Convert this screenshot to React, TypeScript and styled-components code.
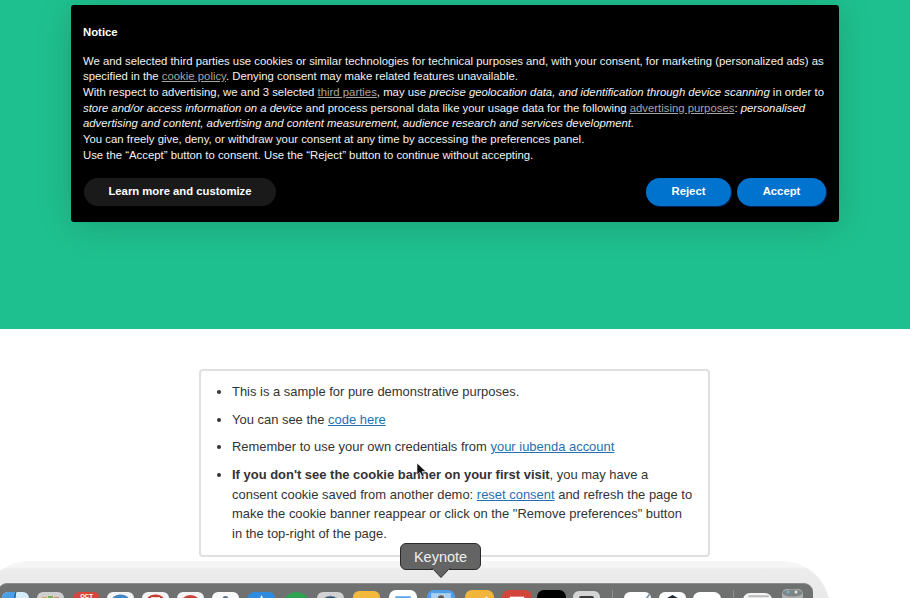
import styled, { createGlobalStyle } from 'styled-components';
import type { ReactNode } from 'react';

const GlobalStyle = createGlobalStyle`
  html, body {
    margin: 0;
    padding: 0;
    background: #fff;
  }
  body {
    font-family: "Liberation Sans", Arial, sans-serif;
  }
`;

const Page = styled.div`
  position: relative;
  width: 910px;
  height: 598px;
  overflow: hidden;
`;

const Hero = styled.div`
  height: 329px;
  background: #1fc08f;
`;

const Banner = styled.div`
  position: absolute;
  top: 5px;
  left: 71px;
  width: 768px;
  height: 217px;
  box-sizing: border-box;
  padding: 20px 13px 16px 12px;
  display: flex;
  flex-direction: column;
  background: #000;
  border-radius: 3px;
  box-shadow: 0 4px 36px rgba(0, 0, 0, 0.16);
  color: #fff;
  font-size: 11.35px;
  line-height: 15.67px;
`;

const BannerTitle = styled.div`
  font-weight: 700;
  margin-bottom: 13px;
`;

const BannerText = styled.div`
  flex: 1;
  white-space: nowrap;
  color: #f2f2f2;
`;

const BannerLink = styled.a`
  color: #a6a6a6;
  text-decoration: underline;
`;

const BannerActions = styled.div`
  display: flex;
  align-items: center;
  padding-left: 1px;
`;

const Button = styled.div<{ $width: number; $primary?: boolean }>`
  width: ${(p) => p.$width}px;
  height: 28px;
  margin-left: ${(p) => (p.$primary ? '6px' : '0')};
  display: flex;
  align-items: center;
  justify-content: center;
  box-sizing: border-box;
  border-radius: 14px;
  background: ${(p) => (p.$primary ? '#0073ce' : '#1a1a1a')};
  box-shadow: ${(p) => (p.$primary ? '1px 1px 0 0 #03235c' : 'none')};
  color: #fff;
  font-size: 11.3px;
  font-weight: 700;
`;

const Spacer = styled.div`
  flex: 1;
`;

const Card = styled.div`
  width: 511px;
  box-sizing: border-box;
  margin: 40px 0 0 199px;
  padding: 11px 14px 11px 0;
  border: 2px solid #e0e0e0;
  border-radius: 4px;
  color: #333;
  font-size: 12.96px;
  line-height: 19.65px;
`;

const List = styled.ul`
  margin: 0;
  padding-left: 31px;
`;

const Item = styled.li`
  margin-bottom: 8px;

  &:last-child {
    margin-bottom: 0;
  }
`;

const TextLink = styled.a`
  color: #2470b3;
  text-decoration: underline;
`;

const Cursor = styled.svg`
  position: absolute;
  top: 462px;
  left: 416px;
`;

const DockHalo = styled.div`
  position: absolute;
  left: -19px;
  bottom: -12px;
  width: 849px;
  height: 49px;
  box-sizing: border-box;
  padding: 22px 17px 0;
  display: flex;
  align-items: flex-start;
  border-radius: 48px 48px 0 0;
  background: linear-gradient(#f6f6f6 0, #f5f5f5 6px, #ececec 8px, #e8e8e8 100%);
`;

const Dock = styled.div`
  flex: 1;
  height: 15px;
  padding-left: 4px;
  display: flex;
  overflow: hidden;
  background: #6f7070;
  border-top: 1px solid #8d8d8d;
  box-sizing: border-box;
  border-radius: 9px 9px 0 0;
`;

const DockIcon = styled.div<{ $w: number; $top: number; $ml: number; $bg: string }>`
  position: relative;
  flex: none;
  width: ${(p) => p.$w}px;
  height: ${(p) => p.$w}px;
  margin-top: ${(p) => p.$top}px;
  margin-left: ${(p) => p.$ml}px;
  overflow: hidden;
  background: ${(p) => p.$bg};
  border-radius: ${(p) => Math.round(p.$w * 0.24)}px;

  svg {
    display: block;
    width: 100%;
    height: 100%;
  }
`;

const CalendarMonth = styled.div`
  padding-top: 1px;
  text-align: center;
  color: #fff;
  font-size: 6px;
  font-weight: 700;
  line-height: 6px;
`;

const DockDivider = styled.div<{ $ml: number }>`
  flex: none;
  width: 1px;
  margin: 6px 0 0 ${(p) => p.$ml}px;
  background: #8f9090;
`;

const Tooltip = styled.div`
  position: absolute;
  top: 543px;
  left: 400px;
  width: 81px;
  height: 27px;
  box-sizing: border-box;
  display: flex;
  align-items: center;
  justify-content: center;
  border: 1px solid #2a2a2a;
  border-radius: 6px;
  background: #646464;
  color: #f0f0f0;
  font-size: 14.5px;
`;

const TooltipArrow = styled.svg`
  position: absolute;
  top: 568px;
  left: 431px;
`;

type DockEntry = { w?: number; top?: number; ml?: number; bg: string; art?: ReactNode };

const art = (children: ReactNode) => <svg viewBox="0 0 27 27">{children}</svg>;

const leftApps: DockEntry[] = [
  { ml: 0, bg: '#d6ecf8', art: art(<><rect width="14" height="27" fill="#4a9fe6" /><path d="M14 0q-3 6 -1 14" stroke="#24507a" fill="none" /></>) },
  { bg: '#cfcfcf', art: art(<><rect x="5" y="5" width="5" height="5" fill="#d9a24a" /><rect x="11" y="4" width="5" height="5" fill="#79b05a" /><rect x="17" y="5" width="5" height="5" fill="#d9864a" /></>) },
  { ml: 9, bg: '#d2483c', art: <CalendarMonth>OCT</CalendarMonth> },
  { ml: 7, bg: '#f4f4f4', art: art(<circle cx="13.5" cy="13.5" r="11" fill="#3f87c9" />) },
  { bg: '#f4f4f4', art: art(<><circle cx="13.5" cy="13.5" r="11" fill="#c93a30" /><rect x="9" y="5" width="9" height="3" fill="#f5d6d0" /></>) },
  { bg: '#f4f4f4', art: art(<circle cx="13.5" cy="14" r="11" fill="#c8443a" />) },
  { bg: '#fafafa', art: art(<><circle cx="13.5" cy="7" r="3" fill="#55708c" /><circle cx="8" cy="9" r="2" fill="#9db0c4" /><circle cx="19" cy="9" r="2" fill="#9db0c4" /></>) },
  { ml: 9, bg: '#2f8be0', art: art(<path d="M13.5 3l2.5 5h-5z" fill="#dcecfa" />) },
  { ml: 8, bg: 'transparent', art: art(<circle cx="13.5" cy="13.5" r="13.5" fill="#2ea34f" />) },
  { ml: 7, bg: '#d2d2d2', art: art(<circle cx="13.5" cy="14" r="10" fill="#27486b" stroke="#8ea0b0" />) },
  { ml: 9, top: 7, bg: '#f3b93d', art: art(<rect y="9" width="27" height="18" fill="#fff" />) },
  { w: 28, ml: 9, top: 6, bg: '#fff', art: art(<rect x="6" y="6" width="15" height="15" fill="#62a6e6" />) },
  { w: 28, ml: 10, top: 6, bg: '#4f9fe8', art: art(<><rect x="4" y="3" width="19" height="20" fill="#a9d0f0" /><circle cx="13.5" cy="8" r="3" fill="#6b5a4a" /></>) },
  { w: 29, ml: 10, top: 6, bg: '#f1b53c', art: art(<path d="M14 12l6-6 1.5 1.5-6 6z" fill="#fff" />) },
  { w: 30, ml: 8, top: 6, bg: '#d2453a', art: art(<><rect x="7" y="6" width="13" height="3" fill="#fff" /><rect x="9" y="9" width="9" height="5" fill="#fff" /></>) },
  { w: 29, ml: 5, top: 6, bg: '#000', art: art(<rect x="10" y="8" width="7" height="12" fill="#8a8a8a" />) },
  { ml: 7, top: 7, bg: '#d4d4d4', art: art(<rect x="6" y="5" width="15" height="20" rx="2" fill="#3a3a3a" />) },
];

const middleApps: DockEntry[] = [
  { ml: 11, bg: '#fff', art: art(<path d="M21 7l5-7 1 1-4 7z" fill="#7c97a8" />) },
  { bg: '#fff', art: art(<path d="M13.5 3l9 5v12h-18V8z" fill="#1c2b36" />) },
  { w: 28, ml: 7, bg: '#fff', art: art(<rect x="8" y="8" width="11" height="2" fill="#b8b8b8" />) },
];

const rightApps: DockEntry[] = [
  { w: 29, ml: 9, top: 9, bg: '#f4f4f4', art: art(<rect x="5" y="2" width="19" height="2" fill="#bdbdbd" />) },
];

const DockApp = ({ w = 27, top = 8, ml = 8, bg, art: content }: DockEntry) => (
  <DockIcon $w={w} $top={top} $ml={ml} $bg={bg}>
    {content}
  </DockIcon>
);

const App = () => {
  return (
    <Page>
      <GlobalStyle />
      <Hero />
      <Card>
        <List>
          <Item>This is a sample for pure demonstrative purposes.</Item>
          <Item>
            You can see the <TextLink>code here</TextLink>
          </Item>
          <Item>
            Remember to use your own credentials from <TextLink>your iubenda account</TextLink>
          </Item>
          <Item>
            <b>If you don't see the cookie banner on your first visit</b>, you may have a consent
            cookie saved from another demo: <TextLink>reset consent</TextLink> and refresh the page
            to make the cookie banner reappear or click on the "Remove preferences" button in the
            top-right of the page.
          </Item>
        </List>
      </Card>

      <Banner>
        <BannerTitle>Notice</BannerTitle>
        <BannerText>
          We and selected third parties use cookies or similar technologies for technical purposes
          and, with your consent, for marketing (personalized ads) as
          <br />
          specified in the <BannerLink>cookie policy</BannerLink>. Denying consent may make related
          features unavailable.
          <br />
          With respect to advertising, we and 3 selected <BannerLink>third parties</BannerLink>, may
          use <i>precise geolocation data, and identification through device scanning</i> in order to
          <br />
          <i>store and/or access information on a device</i> and process personal data like your
          usage data for the following <BannerLink>advertising purposes</BannerLink>:{' '}
          <i>personalised</i>
          <br />
          <i>
            advertising and content, advertising and content measurement, audience research and
            services development.
          </i>
          <br />
          You can freely give, deny, or withdraw your consent at any time by accessing the
          preferences panel.
          <br />
          Use the “Accept” button to consent. Use the “Reject” button to continue without accepting.
        </BannerText>
        <BannerActions>
          <Button $width={192}>Learn more and customize</Button>
          <Spacer />
          <Button $width={85} $primary>
            Reject
          </Button>
          <Button $width={89} $primary>
            Accept
          </Button>
        </BannerActions>
      </Banner>

      <Cursor width="12" height="16" viewBox="0 0 12 16">
        <path d="M1 1v12l3-2.6 2 4.2 2-.9-2-4.1h4z" fill="#111" stroke="#fff" strokeWidth="0.6" />
      </Cursor>

      <DockHalo>
        <Dock>
          {leftApps.map((app, i) => (
            <DockApp key={i} {...app} />
          ))}
          <DockDivider $ml={12} />
          {middleApps.map((app, i) => (
            <DockApp key={i} {...app} />
          ))}
          <DockDivider $ml={12} />
          {rightApps.map((app, i) => (
            <DockApp key={i} {...app} />
          ))}
          <DockIcon $w={21} $top={5} $ml={10} $bg="#a9adad">
            <svg viewBox="0 0 21 21">
              <ellipse cx="10.5" cy="4" rx="10" ry="3.5" fill="#7d8585" />
              <circle cx="6" cy="3" r="1.5" fill="#6fb7d8" />
              <circle cx="14" cy="3" r="1.5" fill="#dfe6e6" />
            </svg>
          </DockIcon>
        </Dock>
      </DockHalo>

      <Tooltip>Keynote</Tooltip>
      <TooltipArrow width="20" height="11" viewBox="0 0 20 11">
        <path d="M0 1h2l8 8.5L18 1h2" fill="#646464" stroke="#2a2a2a" />
        <rect x="2" y="0" width="16" height="2" fill="#646464" />
      </TooltipArrow>
    </Page>
  );
};

export default App;
